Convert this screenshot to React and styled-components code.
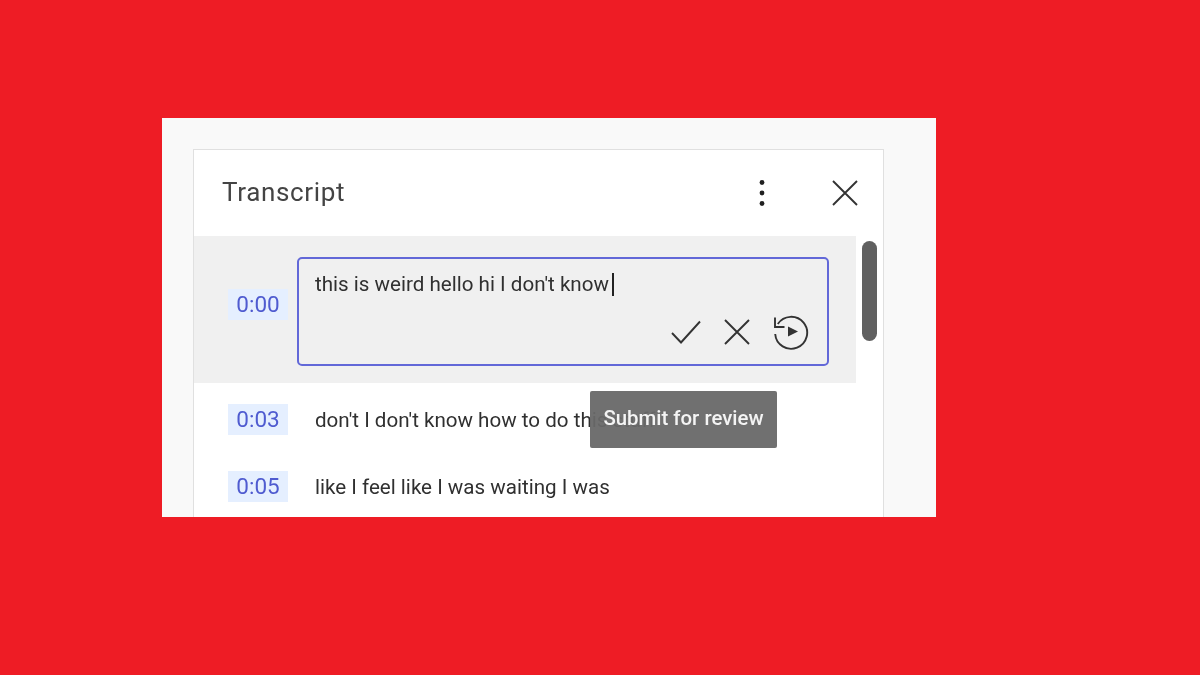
import styled, { createGlobalStyle } from "styled-components"

const GlobalStyle = createGlobalStyle`
    html, body {
        margin: 0;
        padding: 0;
        background: #ee1c25;
        font-family: Roboto, "Liberation Sans", sans-serif;
    }
`;

const Page = styled.div`
    width: 1200px;
    height: 675px;
    padding: 118px 0 0 162px;
    box-sizing: border-box;
    background: #ee1c25;
    overflow: hidden;
`;

const Frame = styled.div`
    width: 774px;
    height: 399px;
    padding: 31px 0 0 31px;
    box-sizing: border-box;
    background: #f9f9f9;
    overflow: hidden;
    filter: blur(0.4px);
`;

const Panel = styled.section`
    width: 691px;
    height: 400px;
    box-sizing: border-box;
    background: #fff;
    border: 1px solid #e0e0e0;
`;

const Header = styled.header`
    height: 85px;
    display: flex;
    align-items: center;
    padding: 0 25px 1px 28px;
`;

const Title = styled.h2`
    flex: 1;
    margin: 0 0 2px;
    font-size: 26px;
    letter-spacing: 0.65px;
    font-weight: 400;
    color: #444;
    line-height: 30px;
`;

const HeaderIcons = styled.div`
    display: flex;
    align-items: center;
    gap: 66px;
`;

const Body = styled.div`
    display: flex;
`;

const List = styled.div`
    position: relative;
    width: 662px;
`;

const Track = styled.div`
    flex: 1;
    padding: 5px 0 0 6px;
`;

const Thumb = styled.div`
    width: 15px;
    height: 100px;
    border-radius: 8px;
    background: #606060;
`;

const ActiveRow = styled.div`
    height: 147px;
    display: flex;
    align-items: center;
    padding-left: 34px;
    box-sizing: border-box;
    background: #f0f0f0;
`;

const Row = styled.div`
    height: 31px;
    display: flex;
    align-items: center;
    margin: ${p => p.$first ? "21px" : "36px"} 0 0 34px;
`;

const Stamp = styled.span`
    width: 60px;
    height: 31px;
    padding-bottom: 2px;
    box-sizing: border-box;
    flex-shrink: 0;
    display: flex;
    align-items: center;
    justify-content: center;
    background: #e5efff;
    color: #4f5bd0;
    font-size: 22.5px;
    margin-top: ${p => p.$active ? "-10px" : "0"};
`;

const Caption = styled.span`
    margin-left: 27px;
    font-size: 20.6px;
    color: #303030;
    white-space: nowrap;
`;

const Editor = styled.div`
    width: 532px;
    height: 109px;
    margin-left: 9px;
    margin-top: 3px;
    padding: 12px 16px 14px;
    box-sizing: border-box;
    display: flex;
    flex-direction: column;
    justify-content: space-between;
    border: 2px solid #6268d8;
    border-radius: 5px;
`;

const EditorText = styled.div`
    font-size: 20.6px;
    line-height: 26px;
    color: #303030;
    white-space: nowrap;
`;

const Cursor = styled.span`
    display: inline-block;
    width: 2px;
    height: 23px;
    margin-left: 3px;
    vertical-align: -5px;
    background: #222;
`;

const EditorActions = styled.div`
    display: flex;
    justify-content: flex-end;
    align-items: center;
    gap: 23px;
    margin-right: 2px;
`;

const Tooltip = styled.div`
    position: absolute;
    left: 396px;
    top: 155px;
    width: 187px;
    height: 57px;
    padding-bottom: 4px;
    box-sizing: border-box;
    display: flex;
    align-items: center;
    justify-content: center;
    border-radius: 2px;
    background: rgba(104, 104, 104, 0.95);
    color: #f4f4f4;
    font-size: 20.4px;
    font-weight: 500;
    white-space: nowrap;
`;

const DotsIcon = () => (
    <svg width="8" height="28" viewBox="0 0 8 28">
        <circle cx="4" cy="3.5" r="2.4" fill="#202020" />
        <circle cx="4" cy="14" r="2.4" fill="#202020" />
        <circle cx="4" cy="24.5" r="2.4" fill="#202020" />
    </svg>
);

const CloseIcon = ({ size }) => (
    <svg width={size} height={size} viewBox="0 0 26 26" fill="none" stroke="#333" strokeWidth="1.9">
        <path d="M1 1 L25 25 M25 1 L1 25" />
    </svg>
);

const CheckIcon = () => (
    <svg width="30" height="24" viewBox="0 0 30 24" fill="none" stroke="#333" strokeWidth="1.9">
        <path d="M1 13 L10 22.5 L29 1.5" />
    </svg>
);

const ReplayIcon = () => (
    <svg width="36" height="36" viewBox="0 0 36 36" fill="none" stroke="#333" strokeWidth="1.9">
        <path d="M4.8 10 A16 16 0 1 1 2.2 20" />
        <path d="M2 3.5 L2 13 L11.5 13" />
        <path d="M15 12.5 L25 17.5 L15 22.5 Z" fill="#333" stroke="none" />
    </svg>
);

export default function App() {
    return (
        <Page>
            <GlobalStyle />
            <Frame>
                <Panel>
                    <Header>
                        <Title>Transcript</Title>
                        <HeaderIcons>
                            <DotsIcon />
                            <CloseIcon size={26} />
                        </HeaderIcons>
                    </Header>
                    <Body>
                        <List>
                            <ActiveRow>
                                <Stamp $active>0:00</Stamp>
                                <Editor>
                                    <EditorText>this is weird hello hi I don't know<Cursor /></EditorText>
                                    <EditorActions>
                                        <CheckIcon />
                                        <CloseIcon size={26} />
                                        <ReplayIcon />
                                    </EditorActions>
                                </Editor>
                            </ActiveRow>
                            <Row $first>
                                <Stamp>0:03</Stamp>
                                <Caption>don't I don't know how to do this stuff</Caption>
                            </Row>
                            <Row>
                                <Stamp>0:05</Stamp>
                                <Caption>like I feel like I was waiting I was</Caption>
                            </Row>
                            <Tooltip>Submit for review</Tooltip>
                        </List>
                        <Track>
                            <Thumb />
                        </Track>
                    </Body>
                </Panel>
            </Frame>
        </Page>
    )
}
